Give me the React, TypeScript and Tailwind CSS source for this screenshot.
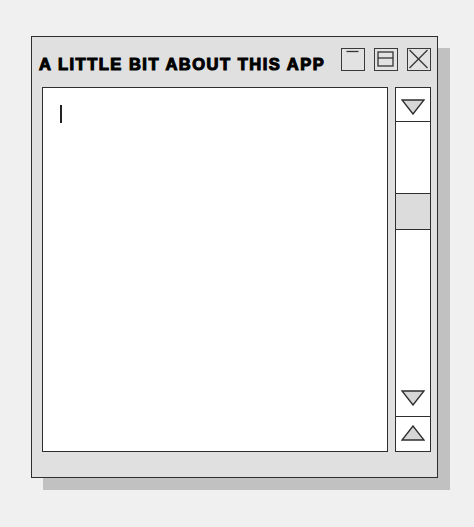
import React from 'react'

const FONT = { fontFamily: '"Liberation Sans", Arial, sans-serif' }

function Triangle({ up = false }: { up?: boolean }) {
  return (
    <svg width="24" height="16" viewBox="0 0 24 16">
      <polygon
        points={up ? '1,15 23,15 12,1' : '1,1 23,1 12,15'}
        fill="#d6d6d6"
        stroke="#2f2f2f"
        strokeWidth="1.4"
        strokeLinejoin="miter"
      />
    </svg>
  )
}

function WinButton({ children }: { children: React.ReactNode }) {
  return (
    <div className="w-[24px] h-[23px] border-[1.5px] border-[#3a3a3a] bg-[#e2e2e2] flex items-center justify-center">
      {children}
    </div>
  )
}

export default function App() {
  return (
    <div className="min-h-[527px] w-full bg-[#f0f0f0] pl-[31px] pt-[36px]" style={FONT}>
      <div className="w-[407px] h-[442px] border-[1.5px] border-[#2e2e2e] bg-[#e0e0e0] shadow-[12px_12px_0_#c1c1c1] flex flex-col">
        {/* title bar */}
        <div className="flex items-start justify-between pl-[7px] pr-[6.5px] pt-[10.5px] h-[33.5px]">
          <h1
            className="text-[16.5px] font-bold leading-none text-black tracking-[1.5px] [-webkit-text-stroke:1.1px_#000] mt-[8.5px]"
            style={FONT}
          >
            A LITTLE BIT ABOUT THIS APP
          </h1>
          <div className="flex items-center gap-[9px]">
            <WinButton>
              <svg width="21" height="20" viewBox="0 0 21 20">
                <line x1="4.5" y1="2.5" x2="16.5" y2="2.5" stroke="#333" strokeWidth="1.3" />
              </svg>
            </WinButton>
            <WinButton>
              <svg width="21" height="20" viewBox="0 0 21 20">
                <rect x="3" y="3" width="15" height="14" fill="none" stroke="#333" strokeWidth="1.3" />
                <line x1="3" y1="9" x2="18" y2="9" stroke="#333" strokeWidth="1.3" />
              </svg>
            </WinButton>
            <WinButton>
              <svg width="21" height="20" viewBox="0 0 21 20">
                <line x1="1.5" y1="1" x2="19.5" y2="19" stroke="#333" strokeWidth="1.3" />
                <line x1="19.5" y1="1" x2="1.5" y2="19" stroke="#333" strokeWidth="1.3" />
              </svg>
            </WinButton>
          </div>
        </div>

        {/* body */}
        <div className="flex flex-1 gap-[7px] pl-[9.5px] pr-[6.5px] pt-[16px] pb-[25.5px]">
          <div className="flex-1 bg-white border-[1.5px] border-[#2e2e2e] pl-[17.5px] pt-[17.5px]">
            <div className="w-[1.5px] h-[18px] bg-[#222]" />
          </div>

          <div className="w-[36px] border-[1.5px] border-[#2e2e2e] bg-white flex flex-col">
            <div className="h-[34px] border-b-[1.5px] border-[#2e2e2e] flex items-start justify-center pt-[11px]">
              <Triangle />
            </div>
            <div className="flex-1 flex flex-col">
              <div className="h-[71px]" />
              <div className="h-[37px] bg-[#dcdcdc] border-y-[1.5px] border-[#2e2e2e]" />
              <div className="flex-1" />
              <div className="flex justify-center mb-[10px]">
                <Triangle />
              </div>
            </div>
            <div className="h-[35px] border-t-[1.5px] border-[#2e2e2e] flex items-start justify-center pt-[8px]">
              <Triangle up />
            </div>
          </div>
        </div>
      </div>
    </div>
  )
}
